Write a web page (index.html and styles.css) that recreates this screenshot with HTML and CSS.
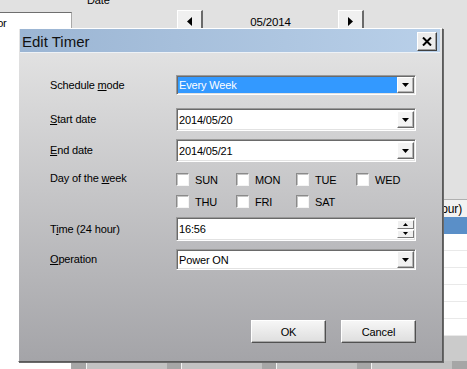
FILE: index.html
```html
<!DOCTYPE html>
<html>
<head>
	<meta charset="UTF-8">
	<title>Edit Timer</title>
	<link rel="stylesheet" href="styles.css">
</head>
<body>
	<!-- Main window behind the dialog -->
	<div class="app">
		<div class="side">
			<div class="side-item">Monitor</div>
		</div>
		<div class="main">
			<div class="toolbar">
				<div class="date-label">Date</div>
				<div class="month-nav">
					<div class="nav-btn"><svg width="5" height="9" viewBox="0 0 5 9"><polygon points="5,0 5,9 0,4.5" fill="#000"/></svg></div>
					<div class="month">05/2014</div>
					<div class="nav-btn"><svg width="5" height="9" viewBox="0 0 5 9"><polygon points="0,0 0,9 5,4.5" fill="#000"/></svg></div>
				</div>
			</div>
			<div class="table">
				<div class="thead"><div class="th">Time (24 hour)</div></div>
				<div class="tr selected"></div>
				<div class="tr"></div>
				<div class="tr"></div>
				<div class="tr"></div>
				<div class="tr"></div>
				<div class="tr"></div>
				<div class="tr"></div>
			</div>
			<div class="table-gap"></div>
			<div class="footer-bar">
				<div class="footer-cell"></div>
				<div class="footer-cell"></div>
				<div class="footer-cell"></div>
				<div class="footer-cell"></div>
			</div>
		</div>
	</div>

	<!-- Edit Timer dialog -->
	<div class="dialog">
		<div class="titlebar">
			<div class="title">Edit Timer</div>
			<div class="close-btn">
				<svg width="10" height="9" viewBox="0 0 10 9"><path d="M1 0.5 L9 8.5 M9 0.5 L1 8.5" stroke="#000" stroke-width="2"/></svg>
			</div>
		</div>
		<div class="dialog-body">
			<div class="row row-schedule">
				<div class="label">Schedule <u>m</u>ode</div>
				<div class="field combo">
					<div class="field-text highlight">Every Week</div>
					<div class="drop"><svg width="7" height="4" viewBox="0 0 7 4"><polygon points="0,0 7,0 3.5,4" fill="#000"/></svg></div>
				</div>
			</div>
			<div class="row row-start">
				<div class="label"><u>S</u>tart date</div>
				<div class="field date">
					<div class="field-text">2014/05/20</div>
					<div class="drop"><svg width="7" height="4" viewBox="0 0 7 4"><polygon points="0,0 7,0 3.5,4" fill="#000"/></svg></div>
				</div>
			</div>
			<div class="row row-end">
				<div class="label"><u>E</u>nd date</div>
				<div class="field date">
					<div class="field-text">2014/05/21</div>
					<div class="drop"><svg width="7" height="4" viewBox="0 0 7 4"><polygon points="0,0 7,0 3.5,4" fill="#000"/></svg></div>
				</div>
			</div>
			<div class="row row-days">
				<div class="label label-top">Day of the <u>w</u>eek</div>
				<div class="days">
					<label class="check"><span class="box"></span>SUN</label>
					<label class="check"><span class="box"></span>MON</label>
					<label class="check"><span class="box"></span>TUE</label>
					<label class="check"><span class="box"></span>WED</label>
					<label class="check"><span class="box"></span>THU</label>
					<label class="check"><span class="box"></span>FRI</label>
					<label class="check"><span class="box"></span>SAT</label>
				</div>
			</div>
			<div class="row row-time">
				<div class="label">T<u>i</u>me (24 hour)</div>
				<div class="field time">
					<div class="field-text">16:56</div>
					<div class="spin">
						<div class="spin-btn"><svg width="5" height="3" viewBox="0 0 5 3"><polygon points="0,3 5,3 2.5,0" fill="#000"/></svg></div>
						<div class="spin-btn"><svg width="5" height="3" viewBox="0 0 5 3"><polygon points="0,0 5,0 2.5,3" fill="#000"/></svg></div>
					</div>
				</div>
			</div>
			<div class="row row-op">
				<div class="label"><u>O</u>peration</div>
				<div class="field combo">
					<div class="field-text">Power ON</div>
					<div class="drop"><svg width="7" height="4" viewBox="0 0 7 4"><polygon points="0,0 7,0 3.5,4" fill="#000"/></svg></div>
				</div>
			</div>
			<div class="actions">
				<div class="btn">OK</div>
				<div class="btn">Cancel</div>
			</div>
		</div>
	</div>
</body>
</html>
```

FILE: styles.css
```css
/* Basic styles */
body {
	margin: 0;
	font-family: "Liberation Sans", Arial, sans-serif;
	font-size: 11px;
	letter-spacing: -0.15px;
	color: #000;
	background-color: #e1e1e1;
	overflow: hidden;
}

/* Background window */
.app {
	display: flex;
	height: 369px;
}
.side {
	width: 72px;
	margin-top: 12px;
	background-color: #fff;
	border-top: 1px solid #6f6f6f;
	border-right: 1px solid #a8a8a8;
	box-sizing: border-box;
	overflow: hidden;
}
.side-item {
	padding-top: 4px;
	text-indent: -29px;
	white-space: nowrap;
}
.main {
	flex: 1;
	display: flex;
	flex-direction: column;
}
.toolbar {
	display: flex;
	flex-direction: column;
	height: 199px;
}
.date-label {
	margin-top: -6px;
	margin-left: 15px;
	line-height: 13px;
}
.month-nav {
	display: flex;
	margin-top: 3px;
	margin-left: 105px;
}
.nav-btn {
	width: 26px;
	height: 22px;
	display: flex;
	align-items: center;
	justify-content: center;
	background-color: #f0f0f0;
	border-top: 1px solid #fff;
	border-left: 1px solid #fff;
	border-right: 2px solid #6a6a6a;
	box-sizing: border-box;
}
.month {
	width: 135px;
	text-align: center;
	font-size: 11.5px;
	line-height: 24px;
}
.table {
	background-color: #fff;
}
.thead {
	height: 18px;
	display: flex;
	justify-content: flex-end;
	align-items: center;
	background-color: #f2f2f2;
	border-top: 1px solid #b0b0b0;
	box-sizing: border-box;
}
.th {
	padding-right: 5px;
	font-size: 12px;
}
.tr {
	height: 17px;
	border-bottom: 1px solid #e9e9e9;
	box-sizing: border-box;
}
.tr.selected {
	background-color: #5a8fc8;
	border-bottom: none;
}
.table-gap {
	height: 25px;
	background-color: #cbcbcb;
}
.footer-bar {
	flex: 1;
	display: flex;
	gap: 14px;
	padding-left: 14px;
	background-color: #a6a6a6;
}
.footer-cell {
	width: 80px;
	background-color: #c2c2c2;
	border-left: 1px solid #f4f4f4;
}

/* Dialog */
.dialog {
	position: absolute;
	left: 18px;
	top: 28px;
	width: 425px;
	height: 334px;
	box-sizing: border-box;
	padding: 0 2px 2px 1px;
	border-top: 1px solid #fff;
	border-left: 1px solid #fff;
	border-right: 1px solid #5a5a5a;
	border-bottom: 1px solid #5a5a5a;
	background: linear-gradient(to bottom, #e6e6e6, #a4a4a8);
	box-shadow: 1px 1px 0 #6a6a6a;
}
.titlebar {
	height: 23px;
	display: flex;
	justify-content: space-between;
	align-items: flex-start;
	background: linear-gradient(to right, #9bb5d3, #b9d0e9);
	border-bottom: 1px solid #eef2f6;
}
.title {
	padding-left: 2px;
	padding-top: 1px;
	font-size: 15px;
	line-height: 23px;
	letter-spacing: 0;
	color: #111;
}
.close-btn {
	width: 20px;
	height: 19px;
	margin-top: 3px;
	margin-right: 3px;
	display: flex;
	align-items: center;
	justify-content: center;
	background-color: #ececec;
	border-top: 1px solid #fff;
	border-left: 1px solid #fff;
	border-right: 1px solid #404040;
	border-bottom: 1px solid #404040;
	box-shadow: inset -1px -1px 0 #a0a0a0;
	box-sizing: border-box;
}
.dialog-body {
	padding: 22px 0 0 30px;
}
.row {
	display: flex;
	align-items: center;
}
.label {
	width: 126px;
	line-height: 13px;
}
.label-top {
	align-self: flex-start;
	margin-top: -1px;
	padding-bottom: 1px;
}
.row-start {
	margin-top: 13px;
}
.row-end {
	margin-top: 8px;
}
.row-days {
	margin-top: 11px;
}
.row-time {
	margin-top: 9px;
}
.row-op {
	margin-top: 8px;
}

/* Sunken fields */
.field {
	width: 240px;
	display: flex;
	box-sizing: border-box;
	background-color: #fff;
	border-top: 1px solid #9a9a9a;
	border-left: 1px solid #9a9a9a;
	border-right: 1px solid #fff;
	border-bottom: 1px solid #fff;
	box-shadow: inset 1px 1px 0 #6a6a6a, inset -1px -1px 0 #e2e2e2;
	padding: 1px;
}
.field.combo {
	height: 20px;
}
.row-op .field.combo {
	height: 21px;
}
.field.date {
	height: 23px;
}
.field.time {
	height: 24px;
}
.field-text {
	flex: 1;
	display: flex;
	align-items: center;
	padding-left: 1px;
}
.field-text.highlight {
	background-color: #3399ff;
	color: #fff;
}
.drop {
	width: 17px;
	display: flex;
	align-items: center;
	justify-content: center;
	background-color: #f0f0f0;
	border-top: 1px solid #fff;
	border-left: 1px solid #fff;
	border-right: 1px solid #6a6a6a;
	border-bottom: 1px solid #6a6a6a;
	box-shadow: inset -1px -1px 0 #b4b4b4;
	box-sizing: border-box;
}
.date .drop {
	margin: 1px 0;
	background-color: #f4f4f4;
}
.spin {
	width: 17px;
	display: flex;
	flex-direction: column;
	gap: 1px;
	padding: 1px 0;
}
.spin-btn {
	flex: 1;
	display: flex;
	align-items: center;
	justify-content: center;
	background-color: #f0f0f0;
	border-top: 1px solid #fff;
	border-left: 1px solid #fff;
	border-right: 1px solid #7a7a7a;
	border-bottom: 1px solid #7a7a7a;
}

/* Checkboxes */
.days {
	display: grid;
	grid-template-columns: repeat(4, 60px);
	row-gap: 9px;
}
.check {
	display: flex;
	align-items: center;
	gap: 6px;
	height: 13px;
}
.box {
	width: 13px;
	height: 13px;
	box-sizing: border-box;
	background-color: #fff;
	border-top: 1px solid #8a8a8a;
	border-left: 1px solid #8a8a8a;
	border-right: 1px solid #f4f4f4;
	border-bottom: 1px solid #f4f4f4;
	box-shadow: inset 1px 1px 0 #c4c4c4;
}

/* Buttons */
.actions {
	width: 366px;
	display: flex;
	justify-content: flex-end;
	gap: 15px;
	margin-top: 50px;
}
.btn {
	width: 75px;
	height: 23px;
	display: flex;
	align-items: center;
	justify-content: center;
	box-sizing: border-box;
	background: linear-gradient(to bottom, #f6f6f6, #dedede);
	border-top: 1px solid #fff;
	border-left: 1px solid #fff;
	border-right: 1px solid #505050;
	border-bottom: 1px solid #505050;
	box-shadow: inset -1px -1px 0 #a8a8a8;
}
```
